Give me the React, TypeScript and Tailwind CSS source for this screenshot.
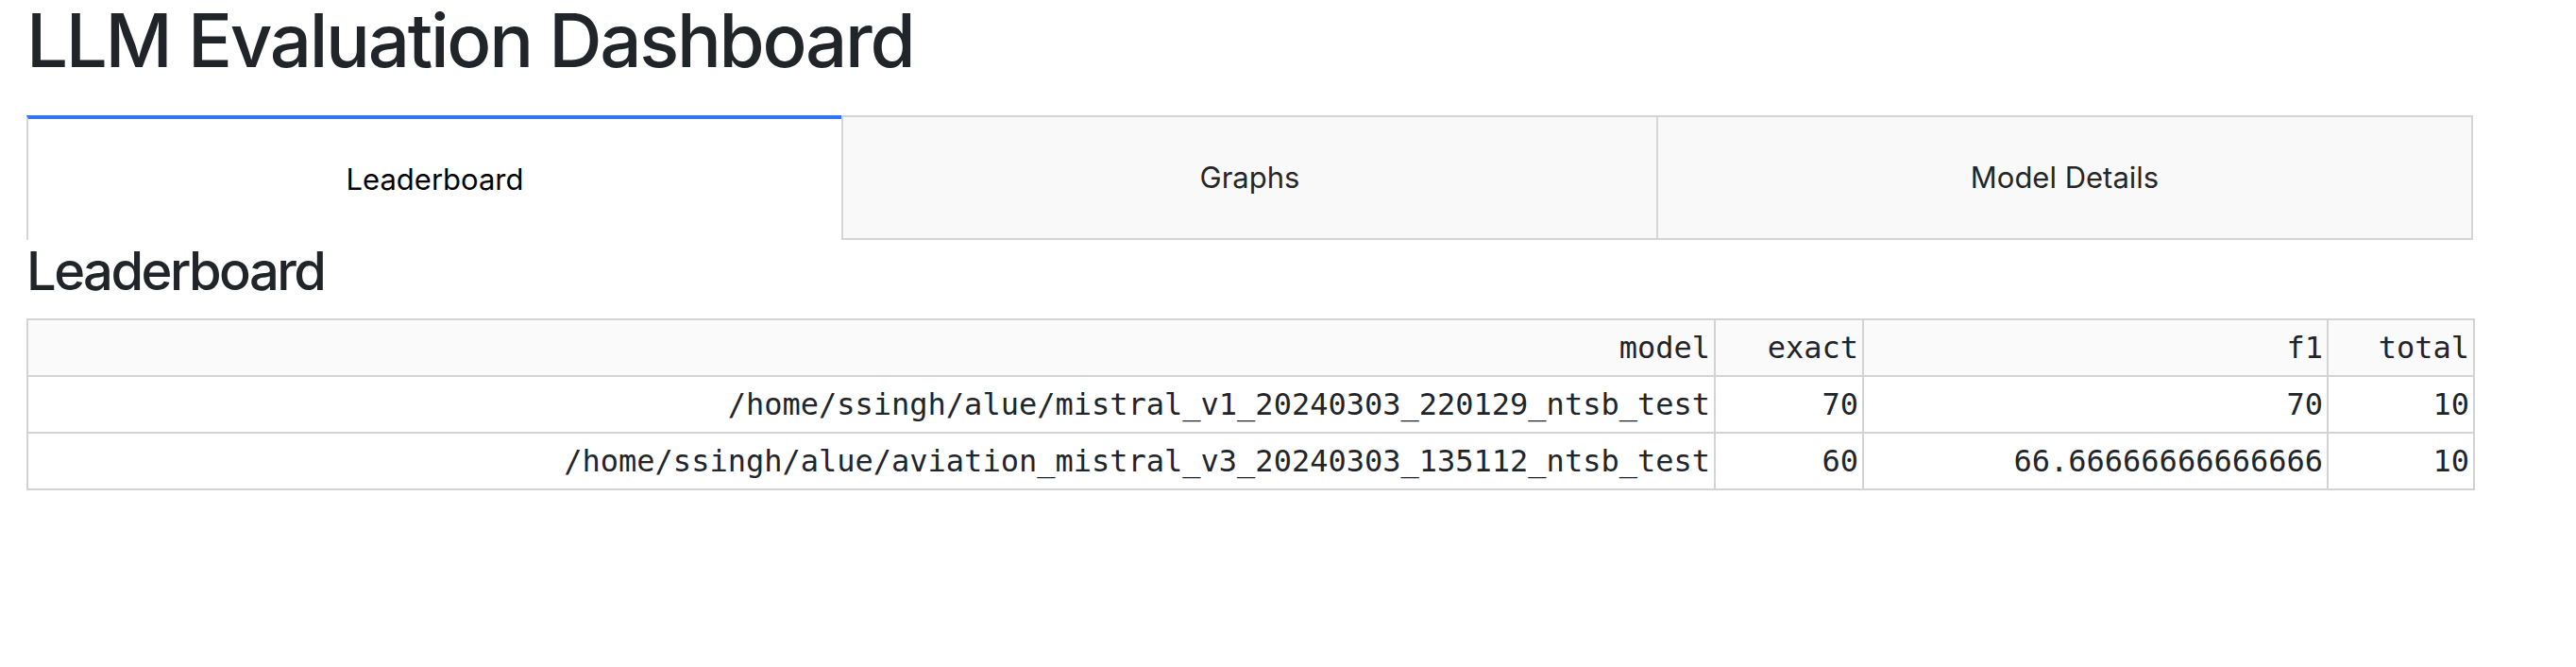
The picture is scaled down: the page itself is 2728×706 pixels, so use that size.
import React, { useState } from "react";

type Row = { model: string; exact: string; f1: string; total: string };

const rows: Row[] = [
  {
    model: "/home/ssingh/alue/mistral_v1_20240303_220129_ntsb_test",
    exact: "70",
    f1: "70",
    total: "10",
  },
  {
    model: "/home/ssingh/alue/aviation_mistral_v3_20240303_135112_ntsb_test",
    exact: "60",
    f1: "66.66666666666666",
    total: "10",
  },
];

const tabs = ["Leaderboard", "Graphs", "Model Details"];

export default function App() {
  const [active, setActive] = useState(0);

  return (
    <div
      className="min-h-screen bg-white text-[#212529]"
      style={{ fontFamily: "Inter, 'Liberation Sans', sans-serif" }}
    >
      <div className="ml-[28px] w-[2591px]">
        <h1 className="mb-[36px] text-[78px] font-medium leading-[86px] tracking-[-2.3px]">
          LLM Evaluation Dashboard
        </h1>

        {/* tabs */}
        <div className="flex h-[132px]">
          {tabs.map((t, i) => {
            const on = i === active;
            const last = i === tabs.length - 1;
            return (
              <button
                key={t}
                onClick={() => setActive(i)}
                className={[
                  "flex flex-1 items-center justify-center border-l-2 border-[#d6d6d6] text-[31px]",
                  last ? "border-r-2" : "",
                  on
                    ? "border-t-4 border-t-[#3476f0] bg-white text-black"
                    : "border-t-2 border-b-2 bg-[#f9f9f9] text-[#262626]",
                ].join(" ")}
              >
                {t}
              </button>
            );
          })}
        </div>

        <h3 className="mb-[16px] text-[56px] font-medium leading-[67px] tracking-[-2.5px]">
          Leaderboard
        </h3>

        <table
          className="w-full table-fixed border-collapse text-[32px] text-[#212529]"
          style={{ fontFamily: "'DejaVu Sans Mono', 'Liberation Mono', monospace" }}
        >
          <colgroup>
            <col className="w-[1787px]" />
            <col className="w-[157px]" />
            <col className="w-[492px]" />
            <col className="w-[155px]" />
          </colgroup>
          <thead>
            <tr className="h-[60px] bg-[#fafafa]">
              {["model", "exact", "f1", "total"].map((h) => (
                <th key={h} className="border-2 border-[#d3d3d3] px-[4px] text-right font-normal">
                  {h}
                </th>
              ))}
            </tr>
          </thead>
          <tbody>
            {rows.map((r) => (
              <tr key={r.model} className="h-[60px]">
                <td className="border-2 border-[#d3d3d3] px-[4px] text-right">{r.model}</td>
                <td className="border-2 border-[#d3d3d3] px-[4px] text-right">{r.exact}</td>
                <td className="border-2 border-[#d3d3d3] px-[4px] text-right">{r.f1}</td>
                <td className="border-2 border-[#d3d3d3] px-[4px] text-right">{r.total}</td>
              </tr>
            ))}
          </tbody>
        </table>
      </div>
    </div>
  );
}
